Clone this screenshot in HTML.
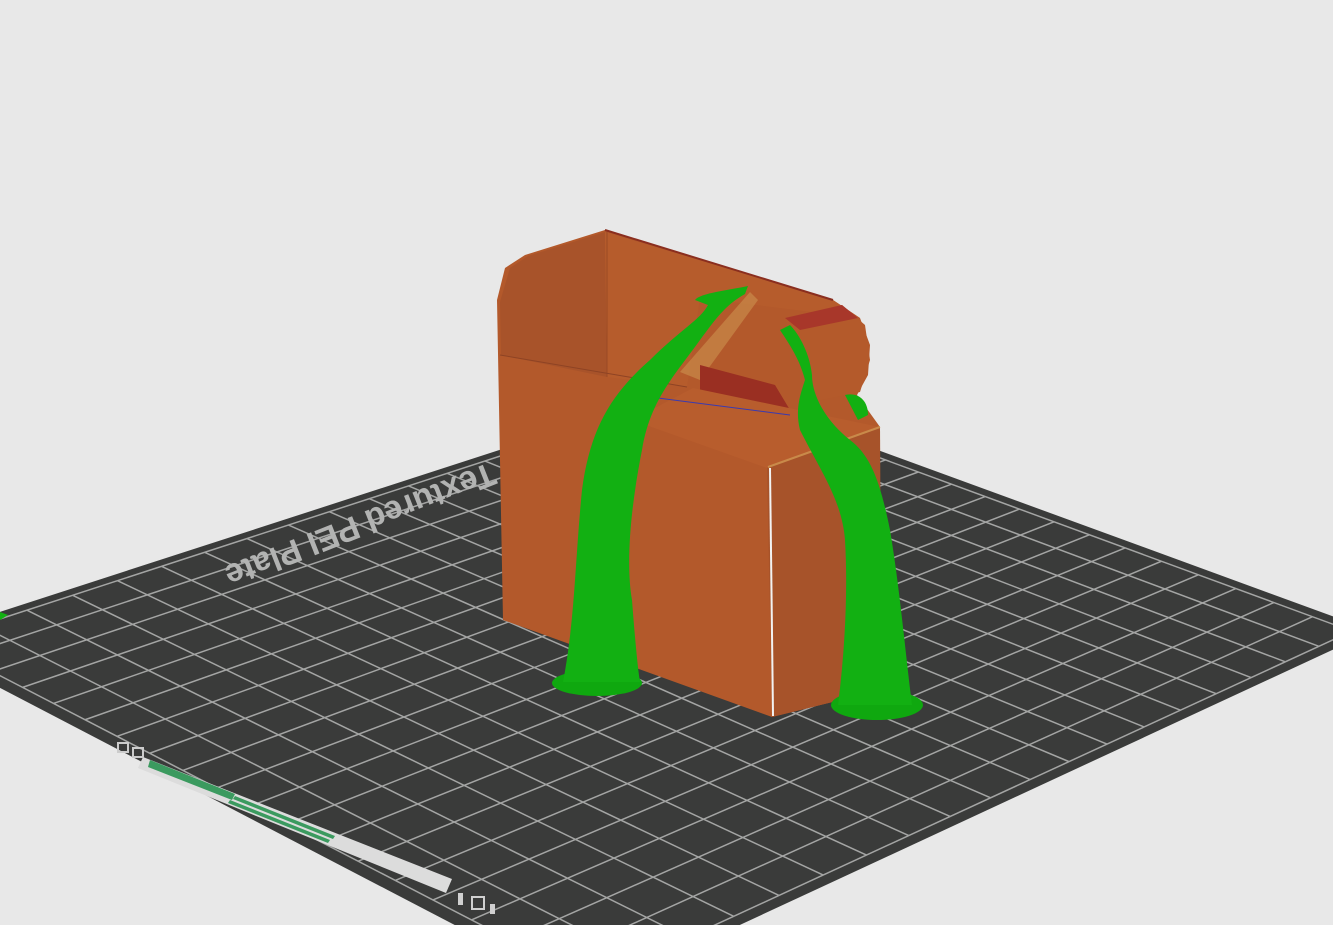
<!DOCTYPE html>
<html><head><meta charset="utf-8"><style>
html,body{margin:0;padding:0;background:#e8e8e8;width:1333px;height:925px;overflow:hidden}
svg{display:block}
</style></head><body>
<svg id="s" width="1333" height="925" viewBox="0 0 1333 925" xmlns="http://www.w3.org/2000/svg">
<rect width="1333" height="925" fill="#e8e8e8"/>
<polygon points="700,385 1373,631 589,995 -90,641" fill="#3a3b3a"/>
<polygon points="80,735 100,742 -5,760 -5,700" fill="#e8e8e8"/>
<g id="grid" stroke="#a4a5a4" stroke-width="1.5" fill="none"></g>
<text transform="translate(490,462) rotate(158.5)" font-family="Liberation Sans, sans-serif" font-weight="bold" font-size="33" fill="#b2b3b2">Textured PEI Plate</text>
<polygon points="143,757 452,879 446,893 138,768" fill="#dcdcdc"/>
<polygon points="150,760 235,794 232,800 148,767" fill="#3b9a5f"/>
<polygon points="235,796 335,836 333,839 233,799" fill="#3b9a5f"/>
<polygon points="230,800 330,840 328,843 228,803" fill="#3b9a5f"/>
<rect x="118" y="743" width="10" height="9" fill="none" stroke="#ccc" stroke-width="2"/>
<rect x="133" y="748" width="10" height="9" fill="none" stroke="#ccc" stroke-width="2"/>
<g fill="#d0d0d0"><rect x="458" y="893" width="5" height="12"/><rect x="472" y="897" width="12" height="12" fill="none" stroke="#d0d0d0" stroke-width="2"/><rect x="490" y="904" width="5" height="10"/></g>
<!-- object -->
<polygon points="497,300 505,268 525,255 605,230 833,300 860,318 870,345 868,375 857,395 880,427 881,690 772,717 503,620" fill="#b3592b"/>
<polygon points="500,302 510,268 528,256 605,232 607,377 501,355" fill="#a8532a"/>
<polygon points="605,232 833,300 860,318 700,298 687,387 607,377" fill="#b65c2c"/>
<polyline points="605,230 833,300" stroke="#8a2e1f" stroke-width="2" fill="none"/>
<line x1="607" y1="232" x2="607" y2="377" stroke="#9a4a25" stroke-width="1"/>
<line x1="500" y1="355" x2="687" y2="387" stroke="#8e4324" stroke-width="1"/>
<polygon points="680,372 750,292 758,300 700,380" fill="#c98a4a" opacity=".7"/>
<polygon points="700,365 775,385 790,410 700,395" fill="#9a2f22"/>
<polygon points="785,318 842,305 865,325 870,360 860,392 820,400 798,360" fill="#b45a2b"/>
<polygon points="785,318 842,305 858,318 800,330" fill="#a8372a"/>
<polygon points="632,420 693,388 880,427 767,468" fill="#b85d2d"/>
<line x1="650" y1="397" x2="790" y2="415" stroke="#3a3ab0" stroke-width="1"/>
<polygon points="767,468 880,427 881,690 772,717" fill="#a7532a"/>
<line x1="770" y1="468" x2="773" y2="716" stroke="#f2f2f2" stroke-width="2"/>
<line x1="768" y1="467" x2="880" y2="427" stroke="#c98a4a" stroke-width="2"/>
<!-- supports -->
<ellipse cx="597" cy="683" rx="45" ry="13" fill="#0fa80f"/>
<path d="M563,682 C575,620 575,560 582,490 C590,430 610,395 650,360 C680,330 700,320 708,305 L695,300 C700,293 730,290 748,286 L745,294 C725,305 715,320 700,340 C675,375 650,400 642,450 C632,500 625,560 632,600 C635,640 638,670 640,682 Z" fill="#12b012"/>
<ellipse cx="877" cy="705" rx="46" ry="15" fill="#0fa80f"/>
<path d="M838,705 C845,650 848,590 845,540 C842,500 820,470 800,430 C795,410 800,395 805,380 C800,360 790,345 780,330 L790,325 C800,335 810,355 812,375 C812,395 825,420 850,440 C870,455 880,480 890,530 C900,590 905,650 912,705 Z" fill="#12b012"/>
<path d="M845,395 C858,392 868,400 868,415 L858,420 Z" fill="#12b012"/>
<path d="M0,612 L8,615 L0,620 Z" fill="#12b012"/>
</svg>
<script>
(function(){
var P=[[700,385],[1373,631],[589,995],[-90,641]];
var x0=P[0][0],y0=P[0][1],x1=P[1][0],y1=P[1][1],x2=P[2][0],y2=P[2][1],x3=P[3][0],y3=P[3][1];
var dx1=x1-x2,dx2=x3-x2,dy1=y1-y2,dy2=y3-y2,sx=x0-x1+x2-x3,sy=y0-y1+y2-y3;
var den=dx1*dy2-dx2*dy1;
var g=(sx*dy2-dx2*sy)/den,h=(dx1*sy-sx*dy1)/den;
var a=x1-x0+g*x1,b=x3-x0+h*x3,c=x0,d=y1-y0+g*y1,e=y3-y0+h*y3,f=y0;
function m(u,v){var w=g*u+h*v+1;return[(a*u+b*v+c)/w,(d*u+e*v+f)/w];}
var G=document.getElementById('grid'),s='',N=19,lo=0.015,hi=0.985;
for(var i=0;i<=N;i++){var t=lo+(hi-lo)*i/N;
var p=m(t,lo),q=m(t,hi);s+='<line x1="'+p[0]+'" y1="'+p[1]+'" x2="'+q[0]+'" y2="'+q[1]+'"/>';
p=m(lo,t);q=m(hi,t);s+='<line x1="'+p[0]+'" y1="'+p[1]+'" x2="'+q[0]+'" y2="'+q[1]+'"/>';}
G.innerHTML=s;
})();
</script>
</body></html>
